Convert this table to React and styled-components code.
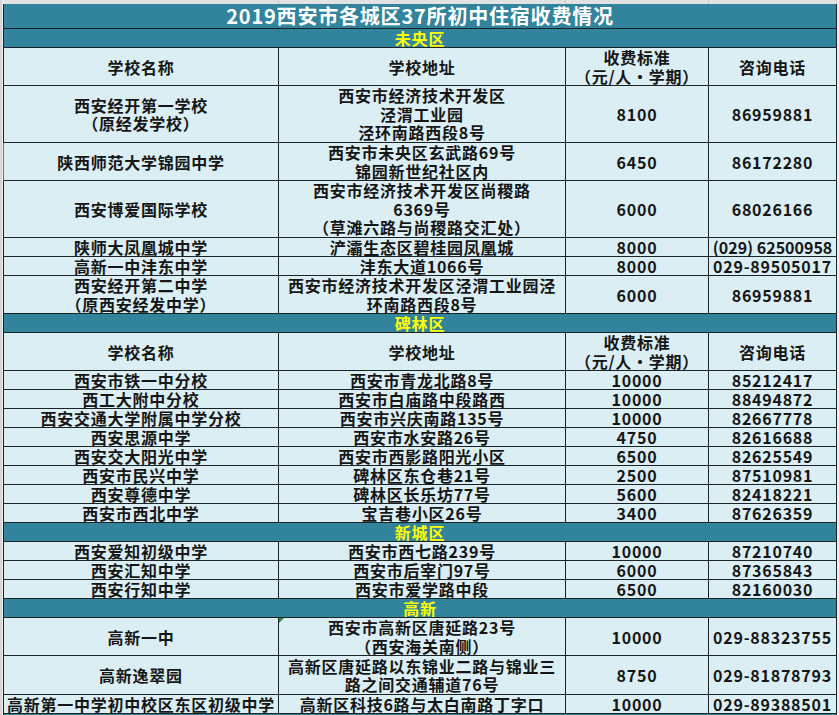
import React from 'react';
import styled, { createGlobalStyle } from 'styled-components';

const Global = createGlobalStyle`
  html, body { margin: 0; padding: 0; background: #e4e4e4; }
  body { font-family: "Noto Sans CJK SC", "Noto Sans", sans-serif; }
`;

const COLS = '275px 287px 143px 128px';
const TEAL = '#31849b';
const LINE = '#1c2326';

const Page = styled.div`
  width: 839px;
  height: 715px;
  overflow: hidden;
  box-sizing: border-box;
  padding-left: 3px;
  background: linear-gradient(to right, #d6d6d6 0 2px, #ececec 2px);
`;

const TopStrip = styled.div`
  display: grid;
  grid-template-columns: ${COLS};
  height: 4px;
  margin-left: 1px;
`;

const StripCell = styled.div`
  border-right: 1px solid #c9c9c9;
  background: #e2e2e2;
`;

const Sheet = styled.div`
  width: 834px;
  box-sizing: border-box;
  border-left: 1px solid ${LINE};
  display: flex;
  flex-direction: column;
`;

const Title = styled.div`
  height: 25px;
  box-sizing: border-box;
  background: ${TEAL};
  border-right: 1px solid ${LINE};
  border-bottom: 1px solid ${LINE};
  color: #ffffff;
  font-size: 20px;
  font-weight: 700;
  letter-spacing: 0.8px;
  display: flex;
  align-items: center;
  justify-content: center;
  line-height: 24px;
`;

const Band = styled.div`
  height: 19px;
  flex: none;
  box-sizing: border-box;
  background: ${TEAL};
  border-right: 1px solid ${LINE};
  border-bottom: 1px solid ${LINE};
  color: #ffff00;
  font-size: 16px;
  font-weight: 700;
  letter-spacing: 0.8px;
  line-height: 18px;
  display: flex;
  align-items: center;
  justify-content: center;
`;

const Row = styled.div`
  display: grid;
  grid-template-columns: ${COLS};
  height: ${(p) => p.$h}px;
  flex: none;
`;

const Cell = styled.div`
  position: relative;
  box-sizing: border-box;
  border-right: 1px solid ${LINE};
  border-bottom: 1px solid ${LINE};
  background: #daeef3;
  color: #161616;
  font-size: 16px;
  font-weight: 700;
  letter-spacing: ${(p) => (p.$tight ? '0' : '0.75px')};
  line-height: ${(p) => (p.$multi ? '18.5px' : '18px')};
  white-space: pre-line;
  text-align: center;
  display: flex;
  align-items: center;
  justify-content: center;
  overflow: visible;
  ${(p) => p.$selected && `box-shadow: -1px 0 0 #3c9a3c;`}
  ${(p) =>
    p.$comment &&
    `&::before {
      content: "";
      position: absolute;
      left: 0;
      top: 0;
      border-top: 5px solid #2f8a2f;
      border-right: 5px solid transparent;
    }`}
`;

const Nowrap = styled.span`
  white-space: pre;
`;

const header = { name: '学校名称', addr: '学校地址', fee: '收费标准\n（元/人・学期）', phone: '咨询电话', h: 38 };

const sections = [
  {
    name: '未央区',
    header: true,
    rows: [
      { name: '西安经开第一学校\n（原经发学校）', addr: '西安市经济技术开发区\n泾渭工业园\n泾环南路西段8号', fee: '8100', phone: '86959881', h: 57 },
      { name: '陕西师范大学锦园中学', addr: '西安市未央区玄武路69号\n锦园新世纪社区内', fee: '6450', phone: '86172280', h: 38, selected: true },
      { name: '西安博爱国际学校', addr: '西安市经济技术开发区尚稷路\n6369号\n（草滩六路与尚稷路交汇处）', fee: '6000', phone: '68026166', h: 57 },
      { name: '陕师大凤凰城中学', addr: '浐灞生态区碧桂园凤凰城', fee: '8000', phone: '(029) 62500958', h: 19, tight: true },
      { name: '高新一中沣东中学', addr: '沣东大道1066号', fee: '8000', phone: '029-89505017', h: 19 },
      { name: '西安经开第二中学\n（原西安经发中学）', addr: '西安市经济技术开发区泾渭工业园泾\n环南路西段8号', fee: '6000', phone: '86959881', h: 38 },
    ],
  },
  {
    name: '碑林区',
    header: true,
    rows: [
      { name: '西安市铁一中分校', addr: '西安市青龙北路8号', fee: '10000', phone: '85212417', h: 19 },
      { name: '西工大附中分校', addr: '西安市白庙路中段路西', fee: '10000', phone: '88494872', h: 19 },
      { name: '西安交通大学附属中学分校', addr: '西安市兴庆南路135号', fee: '10000', phone: '82667778', h: 19 },
      { name: '西安思源中学', addr: '西安市水安路26号', fee: '4750', phone: '82616688', h: 19 },
      { name: '西安交大阳光中学', addr: '西安市西影路阳光小区', fee: '6500', phone: '82625549', h: 19 },
      { name: '西安市民兴中学', addr: '碑林区东仓巷21号', fee: '2500', phone: '87510981', h: 19 },
      { name: '西安尊德中学', addr: '碑林区长乐坊77号', fee: '5600', phone: '82418221', h: 19 },
      { name: '西安市西北中学', addr: '宝吉巷小区26号', fee: '3400', phone: '87626359', h: 19 },
    ],
  },
  {
    name: '新城区',
    rows: [
      { name: '西安爱知初级中学', addr: '西安市西七路239号', fee: '10000', phone: '87210740', h: 19 },
      { name: '西安汇知中学', addr: '西安市后宰门97号', fee: '6000', phone: '87365843', h: 19 },
      { name: '西安行知中学', addr: '西安市爱学路中段', fee: '6500', phone: '82160030', h: 19 },
    ],
  },
  {
    name: '高新',
    rows: [
      { name: '高新一中', addr: '西安市高新区唐延路23号\n（西安海关南侧）', fee: '10000', phone: '029-88323755', h: 38, comment: true },
      { name: '高新逸翠园', addr: '高新区唐延路以东锦业二路与锦业三\n路之间交通辅道76号', fee: '8750', phone: '029-81878793', h: 39 },
      { name: '高新第一中学初中校区东区初级中学', addr: '高新区科技6路与太白南路丁字口', fee: '10000', phone: '029-89388501', h: 18 },
    ],
  },
];

const isMulti = (t) => t.includes('\n');

function DataRow({ r }) {
  return (
    <Row $h={r.h}>
      <Cell $selected={r.selected} $multi={isMulti(r.name)}><Nowrap>{r.name}</Nowrap></Cell>
      <Cell $comment={r.comment} $multi={isMulti(r.addr)}><Nowrap>{r.addr}</Nowrap></Cell>
      <Cell $multi={isMulti(r.fee)}><Nowrap>{r.fee}</Nowrap></Cell>
      <Cell $tight={r.tight}><Nowrap>{r.phone}</Nowrap></Cell>
    </Row>
  );
}

export default function App() {
  return (
    <>
      <Global />
      <Page>
        <TopStrip>
          <StripCell />
          <StripCell />
          <StripCell />
          <StripCell />
        </TopStrip>
        <Sheet>
          <Title>2019西安市各城区37所初中住宿收费情况</Title>
          {sections.map((s) => (
            <React.Fragment key={s.name}>
              <Band>{s.name}</Band>
              {s.header && <DataRow r={header} />}
              {s.rows.map((r, i) => (
                <DataRow key={i} r={r} />
              ))}
            </React.Fragment>
          ))}
          <Band />
        </Sheet>
      </Page>
    </>
  );
}
